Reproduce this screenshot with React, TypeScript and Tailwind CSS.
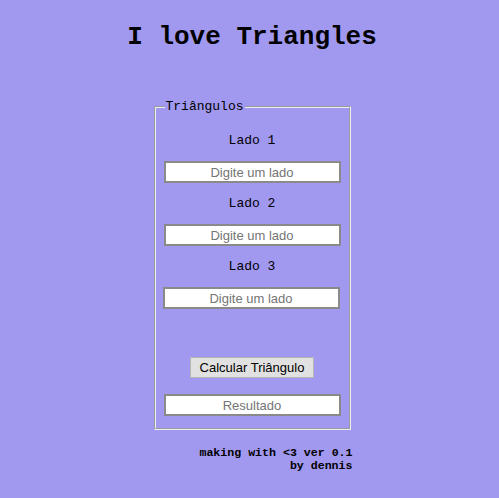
export default function App() {
  const mono = { fontFamily: '"Liberation Mono", "Courier New", monospace' };

  const inputCls =
    "w-full h-[22px] bg-white border-2 border-[#8a8a8a] text-center text-[13px] text-black placeholder:text-[#757575] outline-none [font-family:'Liberation_Sans',Arial,sans-serif]";

  return (
    <div className="min-h-screen h-[498px] bg-[#a198f0] pl-[5px] pt-[22px]" style={mono}>
      <h1 className="text-center text-[26px] leading-[30px] font-bold text-black">
        I love Triangles
      </h1>

      <fieldset className="mx-auto mt-[47px] w-[197px] border-2 [border-style:groove] border-[#eeeeee] px-[8px] pt-[19px] pb-[12px]">
        <legend className="ml-[1px] px-[1px] text-[13px] leading-[15px] text-black">
          Triângulos
        </legend>

        <div className="flex flex-col items-center">
          <label className="text-[13px] leading-[16px] text-black">Lado 1</label>
          <input className={inputCls + " mt-[12px]"} placeholder="Digite um lado" />

          <label className="mt-[13px] text-[13px] leading-[16px] text-black">Lado 2</label>
          <input className={inputCls + " mt-[12px]"} placeholder="Digite um lado" />

          <label className="mt-[13px] text-[13px] leading-[16px] text-black">Lado 3</label>
          <input className={inputCls + " mt-[12px] -translate-x-px"} placeholder="Digite um lado" />

          <button className="mt-[48px] h-[21px] w-[124px] bg-[#e1e1e1] border border-[#b5b5b5] text-[13px] leading-[19px] text-black [font-family:'Liberation_Sans',Arial,sans-serif]">
            Calcular Triângulo
          </button>

          <input className={inputCls + " mt-[16px]"} placeholder="Resultado" readOnly />
        </div>
      </fieldset>

      <div className="mx-auto mt-[16px] w-[201px] text-right text-[11.6px] leading-[13px] font-bold text-black">
        <div>making with &lt;3 ver 0.1</div>
        <div>by dennis</div>
      </div>
    </div>
  );
}
